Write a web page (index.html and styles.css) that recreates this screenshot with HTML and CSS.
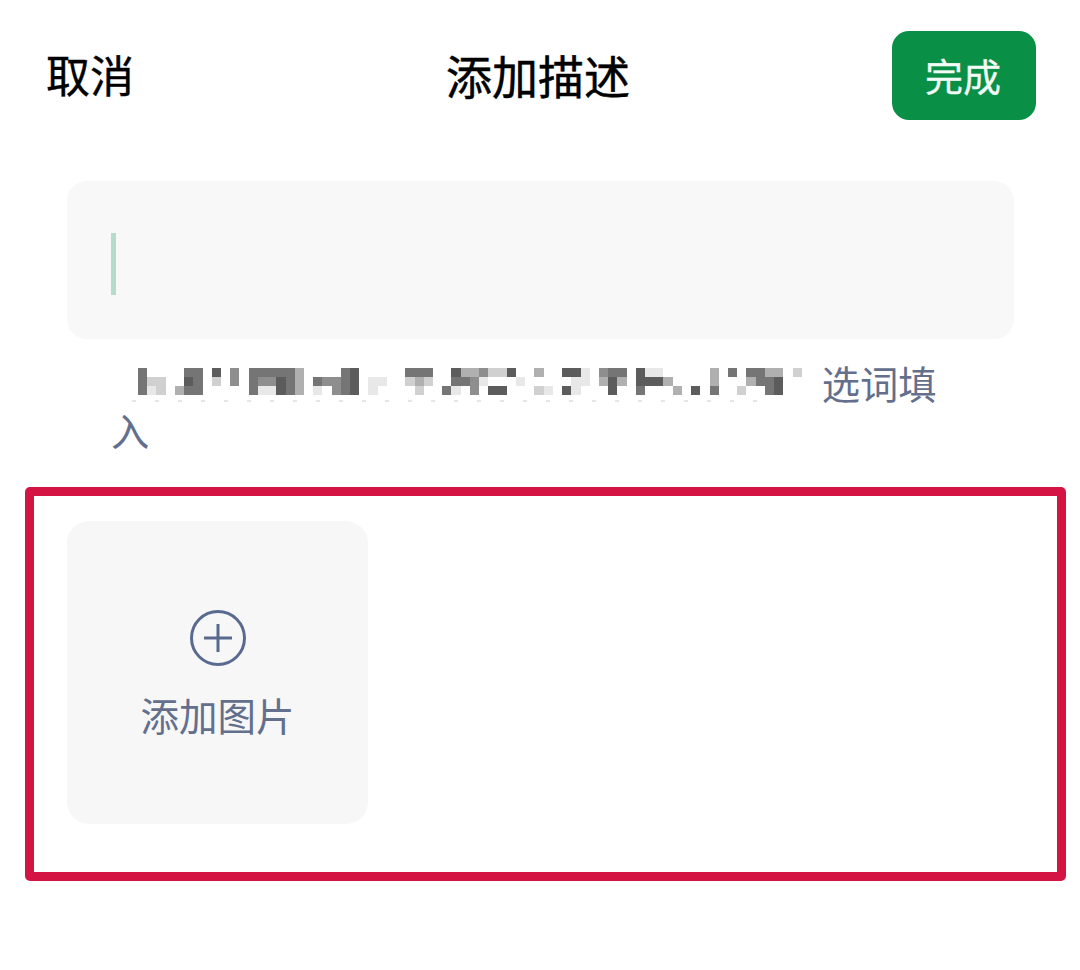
FILE: index.html
```html
<!DOCTYPE html>
<html lang="zh">
<head>
<meta charset="utf-8">
<title>添加描述</title>
<link rel="stylesheet" href="styles.css">
</head>
<body>
<header class="topbar">
  <span class="cancel">取消</span>
  <h1 class="title">添加描述</h1>
  <button class="done" type="button">完成</button>
</header>
<main class="content">
  <div class="input"><span class="caret"></span></div>
  <p class="hint"><span class="mosaic" aria-hidden="true"><i class="s5"></i><i class="s5"></i><i class="s5"></i><i></i><i class="s2"></i><i class="s1"></i><i></i><i class="s2"></i><i class="s2"></i><i></i><i></i><i></i><i></i><i></i><i class="s3"></i><i class="s5"></i><i class="s6"></i><i class="s5"></i><i class="s5"></i><i class="s5"></i><i class="s5"></i><i></i><i></i><i></i><i class="s6"></i><i class="s2"></i><i></i><i></i><i></i><i></i><i class="s4"></i><i class="s4"></i><i></i><i></i><i></i><i></i><i class="s5"></i><i class="s5"></i><i class="s5"></i><i class="s5"></i><i class="s4"></i><i class="s1"></i><i class="s5"></i><i class="s4"></i><i class="s1"></i><i class="s5"></i><i class="s6"></i><i class="s6"></i><i class="s5"></i><i class="s5"></i><i class="s5"></i><i class="s3"></i><i class="s3"></i><i class="s3"></i><i></i><i></i><i></i><i></i><i class="s5"></i><i class="s1"></i><i></i><i class="s4"></i><i></i><i></i><i class="s4"></i><i class="s4"></i><i class="s5"></i><i class="s5"></i><i class="s5"></i><i class="s6"></i><i class="s6"></i><i class="s6"></i><i></i><i></i><i></i><i></i><i class="s1"></i><i class="s1"></i><i></i><i class="s1"></i><i></i><i></i><i></i><i></i><i></i><i></i><i></i><i class="s5"></i><i class="s2"></i><i></i><i class="s5"></i><i class="s3"></i><i class="s2"></i><i class="s5"></i><i class="s2"></i><i></i><i></i><i></i><i></i><i></i><i></i><i class="s5"></i><i class="s6"></i><i class="s5"></i><i class="s1"></i><i class="s3"></i><i class="s5"></i><i></i><i class="s3"></i><i class="s4"></i><i class="s4"></i><i class="s4"></i><i class="s1"></i><i></i><i class="s2"></i><i></i><i class="s6"></i><i class="s2"></i><i></i><i class="s6"></i><i class="s6"></i><i></i><i></i><i></i><i class="s1"></i><i></i><i></i><i></i><i></i><i class="s3"></i><i></i><i class="s2"></i><i></i><i></i><i class="s1"></i><i></i><i></i><i></i><i class="s6"></i><i></i><i class="s6"></i><i class="s6"></i><i class="s1"></i><i class="s1"></i><i class="s1"></i><i class="s1"></i><i></i><i></i><i></i><i></i><i class="s4"></i><i class="s3"></i><i></i><i class="s5"></i><i class="s6"></i><i class="s6"></i><i class="s5"></i><i class="s3"></i><i></i><i></i><i></i><i></i><i class="s6"></i><i class="s6"></i><i class="s5"></i><i class="s1"></i><i class="s6"></i><i></i><i class="s1"></i><i class="s6"></i><i></i><i></i><i class="s3"></i><i></i><i></i><i></i><i class="s3"></i><i></i><i></i><i></i><i></i><i></i><i class="s6"></i><i></i><i></i><i></i><i class="s3"></i><i class="s3"></i><i class="s5"></i><i></i><i></i><i></i><i class="s5"></i><i></i><i></i><i></i><i></i><i class="s2"></i><i class="s5"></i><i class="s3"></i><i></i><i class="s5"></i><i class="s5"></i><i></i><i class="s3"></i><i class="s5"></i><i class="s5"></i><i class="s3"></i><i class="s6"></i><i class="s6"></i><i></i><i></i><i></i><i class="s2"></i><i></i><i></i></span><span class="hint-text">选词填入</span></p>
  <section class="frame">
    <div class="add-tile">
      <svg class="plus" viewBox="0 0 56 56" aria-hidden="true">
        <circle cx="28" cy="28" r="26.5"/>
        <path d="M14 28H42M28 14V42"/>
      </svg>
      <span class="add-label">添加图片</span>
    </div>
  </section>
</main>
</body>
</html>
```
FILE: styles.css
```css
* { box-sizing: border-box; }

html, body {
  margin: 0;
  height: 100%;
  background: #fff;
}

body {
  font-family: "Noto Sans CJK SC", "Noto Sans", sans-serif;
  color: #000;
  overflow: hidden;
}

.topbar {
  display: grid;
  grid-template-columns: 400px auto 1fr;
  align-items: start;
  padding: 31px 44px 0 46px;
}

.cancel {
  font-size: 44px;
  line-height: 87px;
  font-weight: 400;
  -webkit-text-stroke: 0.4px #000;
}

.title {
  margin: 0;
  font-size: 46px;
  line-height: 87px;
  font-weight: 400;
  -webkit-text-stroke: 0.5px #000;
}

.done {
  justify-self: end;
  width: 144px;
  height: 89px;
  padding: 0 2px 2px 0;
  border: 0;
  border-radius: 17px;
  background: #0a8f47;
  color: #f2fbf5;
  font: 400 38px/85px "Noto Sans CJK SC", sans-serif;
  -webkit-text-stroke: 0.3px #f2fbf5;
}

.content {
  padding: 61px 14px 0 25px;
}

.input {
  margin: 0 52px 0 42px;
  height: 158px;
  padding: 52px 44px;
  border-radius: 20px;
  background: #f8f8f8;
}

.caret {
  display: block;
  width: 5px;
  height: 62px;
  background: #b5dccb;
}

.hint {
  margin: 0;
  padding: 20px 0 3px 86px;
  width: 916px;
  font-size: 38.3px;
  line-height: 47px;
  color: #636f8c;
}

.mosaic {
  position: relative;
  display: inline-grid;
  grid-template-rows: repeat(3, 9px);
  grid-auto-flow: column;
  grid-auto-columns: 9.23px;
  margin: 9px 20px 0 27px;
  vertical-align: top;
  filter: blur(0.7px);
}

.mosaic::after {
  content: "";
  position: absolute;
  top: 32px;
  left: -6px;
  width: 640px;
  height: 2px;
  background: repeating-linear-gradient(90deg, #e6e6e6 0 4px, transparent 4px 23px);
}

.mosaic .s1 { background: #e8e8e8; }
.mosaic .s2 { background: #d0d0d0; }
.mosaic .s3 { background: #b0b0b0; }
.mosaic .s4 { background: #8e8e8e; }
.mosaic .s5 { background: #757575; }
.mosaic .s6 { background: #5c5c5c; }

.frame {
  margin-top: 31px;
  height: 394px;
  padding: 25px 33px;
  border: 9px solid #d41543;
  border-radius: 5px;
}

.add-tile {
  width: 301px;
  height: 303px;
  display: flex;
  flex-direction: column;
  align-items: center;
  padding-top: 89px;
  border-radius: 22px;
  background: #f7f7f8;
}

.plus {
  display: block;
  width: 56px;
  height: 56px;
  fill: none;
  stroke: #5a6a8f;
  stroke-width: 3;
}

.add-label {
  margin-top: 20px;
  font-size: 38.5px;
  line-height: 56px;
  color: #636f8c;
}
```
